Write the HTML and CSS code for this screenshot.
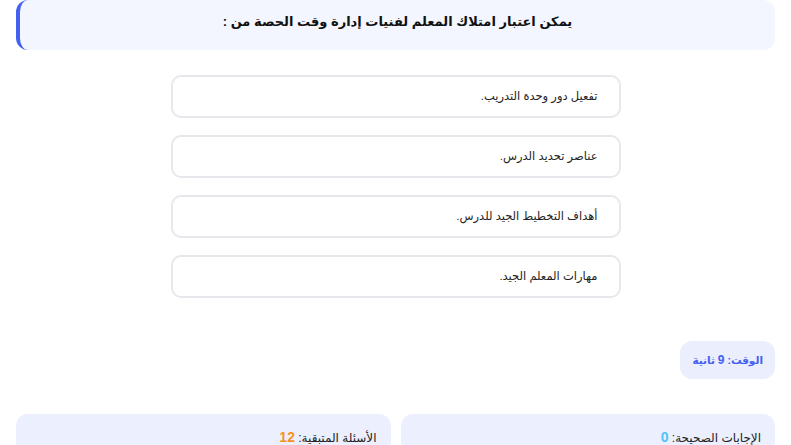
FILE: index.html
```html
<!DOCTYPE html>
<html lang="ar" dir="rtl">
<head>
  <meta charset="UTF-8">
  <title>اختبار</title>
  <meta name="viewport" content="width=device-width, initial-scale=1.0">
  <link rel="stylesheet" href="styles.css">
</head>
<body>

<div class="quiz-container">
  <div class="question">يمكن اعتبار امتلاك المعلم لفنيات إدارة وقت الحصة من :</div>

  <div class="options">
    <div class="option">تفعيل دور وحدة التدريب.</div>
    <div class="option">عناصر تحديد الدرس.</div>
    <div class="option">أهداف التخطيط الجيد للدرس.</div>
    <div class="option">مهارات المعلم الجيد.</div>
  </div>

  <div class="timer-row">
    <div class="timer">الوقت: <span>9</span> ثانية</div>
  </div>

  <div class="stats">
    <div class="stat">الإجابات الصحيحة: <span class="correct">0</span></div>
    <div class="stat">الأسئلة المتبقية: <span class="left">12</span></div>
  </div>
</div>

</body>
</html>
```

FILE: styles.css
```css
body {
  font-family: 'Liberation Sans', 'DejaVu Sans', sans-serif;
  background: #fff;
  margin: 0;
  color: #222;
}

.quiz-container {
  padding: 0 16px;
  height: 445px;
  overflow: hidden;
}

.question {
  background: #f3f6fe;
  border-left: 4px solid #4361ee;
  border-radius: 12px;
  height: 50px;
  box-sizing: border-box;
  padding-top: 14px;
  text-align: center;
  font-size: 13px;
  font-weight: bold;
  color: #111;
}

.options {
  max-width: 450px;
  margin: 25px auto 0;
  display: flex;
  flex-direction: column;
  gap: 17px;
}

.option {
  height: 43px;
  box-sizing: border-box;
  border: 2px solid #e6e8ec;
  border-radius: 10px;
  padding: 12px 21px 0;
  font-size: 11.5px;
  color: #222;
}

.timer-row {
  display: flex;
  margin-top: 43px;
}

.timer {
  background: #eaeefd;
  border-radius: 12px;
  padding: 12px 12px;
  font-size: 10.5px;
  font-weight: bold;
  color: #4361ee;
}

.timer span {
  font-size: 12px;
}

.stats {
  display: grid;
  grid-template-columns: 1fr 1fr;
  gap: 10px;
  margin-top: 35px;
}

.stat {
  background: #eceffd;
  border-radius: 12px;
  height: 60px;
  padding: 15px 14px 0;
  font-size: 12px;
  color: #222;
}

.stat span {
  font-size: 14px;
  font-weight: bold;
}

.correct {
  color: #4fc3f7;
}

.left {
  color: #f7941d;
}
```
